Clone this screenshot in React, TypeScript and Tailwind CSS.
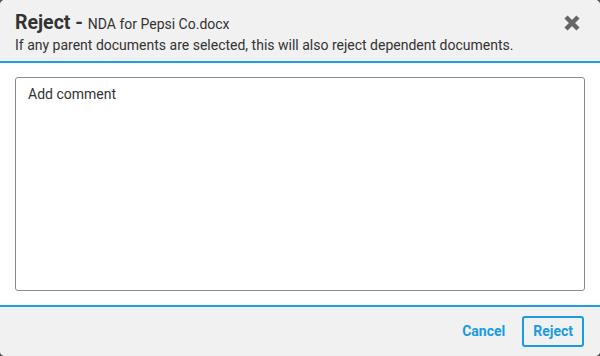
const App = () => {
  return (
    <div className="w-[600px] h-[356px] bg-[#555]" style={{ fontFamily: 'Roboto, "Noto Sans", sans-serif' }}>
      <div className="flex flex-col w-full h-full overflow-hidden rounded-[5px] bg-white text-[#333]">
        {/* Header */}
        <div className="flex items-start justify-between h-[63px] pl-[15px] pr-[19px] bg-[#f1f1f1] border-b-2 border-[#1e9fdc]">
          <div className="pt-[11px]">
            <p className="leading-[24px]">
              <span className="text-[19.5px] font-bold">Reject - </span>
              <span className="text-[14px]">NDA for Pepsi Co.docx</span>
            </p>
            <p className="text-[14px] leading-[19px]">
              If any parent documents are selected, this will also reject dependent documents.
            </p>
          </div>
          <button className="mt-[14px] text-[#666]" aria-label="Close">
            <svg width="18" height="18" viewBox="0 0 18 18">
              <path d="M3 3 L15 15 M15 3 L3 15" stroke="currentColor" strokeWidth="4.5" strokeLinecap="butt" />
            </svg>
          </button>
        </div>

        {/* Body */}
        <div className="flex flex-1 px-[15px] py-[14px]">
          <textarea
            className="flex-1 resize-none rounded-[3px] border border-[#8a8a8a] px-[12px] py-[6px] text-[14px] text-[#333] placeholder:text-[#333] outline-none"
            placeholder="Add comment"
          />
        </div>

        {/* Footer */}
        <div className="flex items-center justify-end gap-[17px] h-[51px] pr-[16px] bg-[#f1f1f1] border-t-2 border-[#1e9fdc]">
          <button className="text-[14px] font-bold text-[#1a9be0]">Cancel</button>
          <button className="h-[31px] px-[9px] rounded-[3px] border-2 border-[#1a9be0] text-[14px] font-bold text-[#1a9be0]">
            Reject
          </button>
        </div>
      </div>
    </div>
  );
};

export default App;
